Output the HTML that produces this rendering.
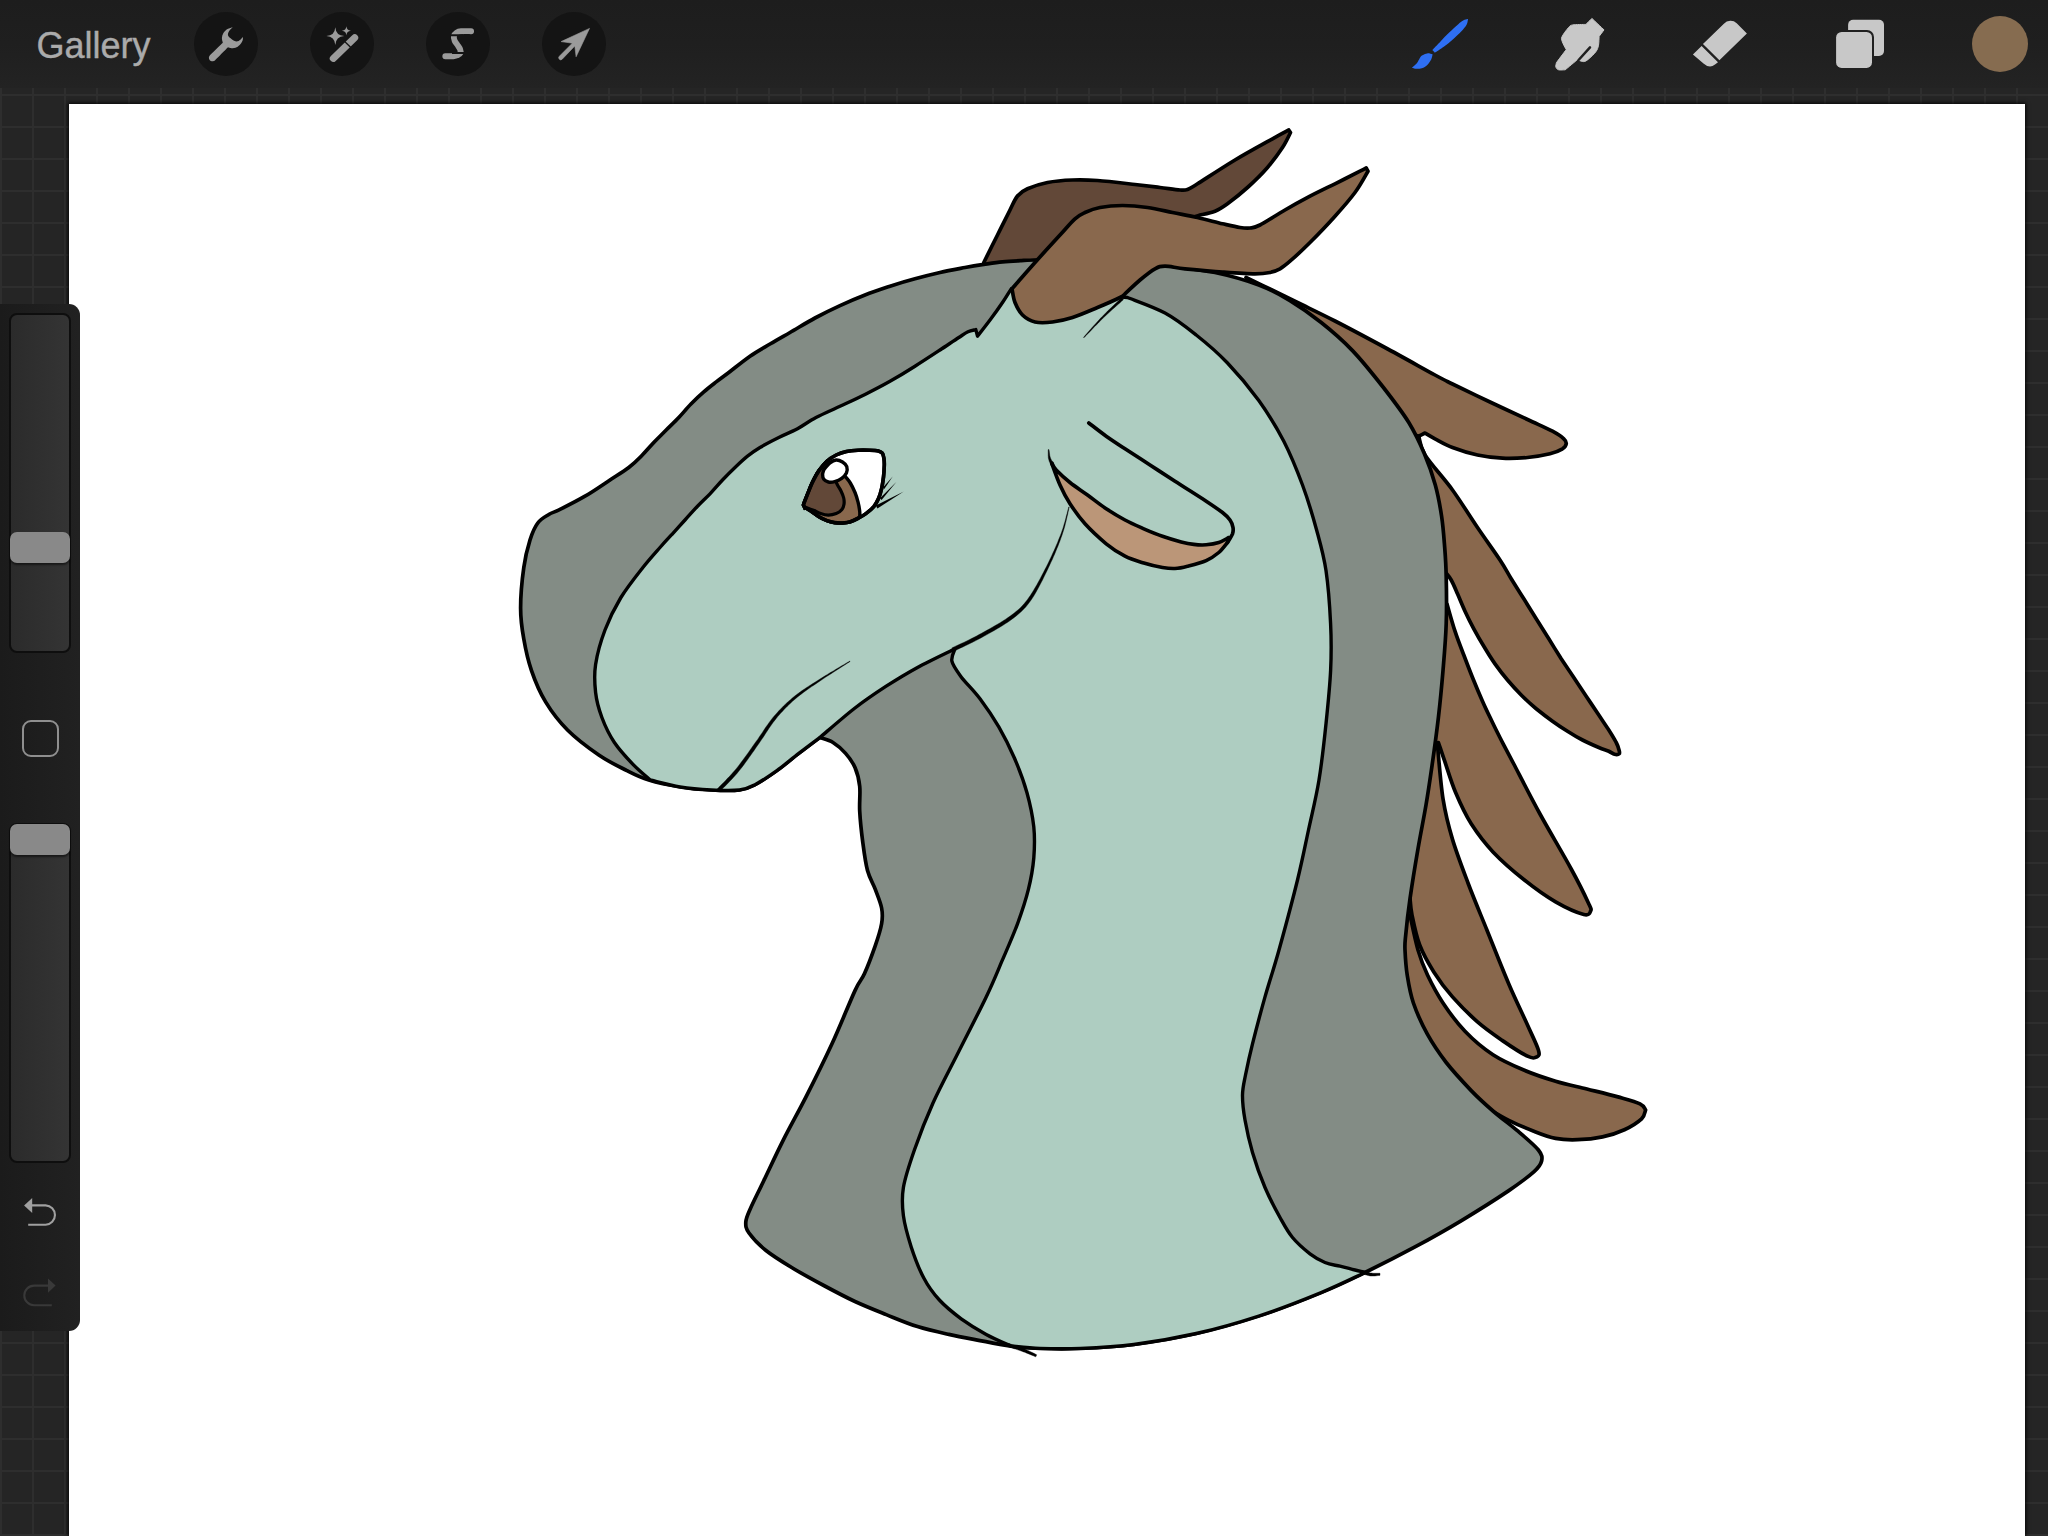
<!DOCTYPE html>
<html><head><meta charset="utf-8"><title>Procreate</title>
<style>
html,body{margin:0;padding:0;}
body{width:2048px;height:1536px;overflow:hidden;position:relative;font-family:"Liberation Sans",sans-serif;
 background-color:#252525;
 background-image:linear-gradient(to right,#2e2e2e 0,#2e2e2e 2px,transparent 2px),linear-gradient(to bottom,#2e2e2e 0,#2e2e2e 2px,transparent 2px);
 background-size:32px 32px;background-position:0px 94px;}
#top{position:absolute;left:0;top:0;width:2048px;height:88px;background:linear-gradient(to bottom,#1d1d1d 0%,#1f1f1f 50%,#232323 100%);}
#gallery{position:absolute;left:36.5px;top:23.5px;font-size:36px;line-height:44px;color:#ababab;letter-spacing:0;-webkit-text-stroke:0.4px #ababab;}
.circ{position:absolute;top:12px;width:64px;height:64px;border-radius:32px;background:#141414;}
#canvas{position:absolute;left:69.3px;top:103.9px;width:1955.7px;height:1432px;background:#fff;box-shadow:0 0 4px 1px rgba(0,0,0,0.9);}
#side{position:absolute;left:0;top:304px;width:80px;height:1027px;background:linear-gradient(to right,#1b1b1b,#212121);border-radius:0 11px 11px 0;}
.track{position:absolute;left:9px;width:58px;border-radius:8px;background:linear-gradient(to right,#2b2b2b,#343434);border:2px solid #0e0e0e;}
.thumb{position:absolute;left:10px;width:60px;height:31px;border-radius:7px;background:#898989;box-shadow:0 2px 2px rgba(0,0,0,.5);}
#sq{position:absolute;left:21.5px;top:416px;width:33.5px;height:32.5px;border:2px solid #8f8f8f;border-radius:9px;}
svg{position:absolute;left:0;top:0;}
</style></head><body>
<div id="canvas"></div>
<svg id="art" width="2048" height="1536" viewBox="0 0 2048 1536">
<path d="M1246.0 277.5 C1250.2 279.5 1262.4 285.3 1271.0 289.5 C1279.6 293.7 1286.8 297.2 1297.5 302.5 C1308.2 307.8 1320.4 313.5 1335.0 321.0 C1349.6 328.5 1368.3 338.5 1385.0 347.5 C1401.7 356.5 1423.8 368.9 1435.0 375.0 C1446.2 381.1 1443.3 379.5 1452.5 384.0 C1461.7 388.5 1477.5 396.1 1490.0 402.0 C1502.5 407.9 1517.1 414.6 1527.5 419.5 C1537.9 424.4 1546.5 428.0 1552.5 431.2 C1558.5 434.5 1561.5 436.7 1563.8 438.8 C1566.0 440.8 1566.5 442.1 1566.2 443.8 C1566.0 445.4 1565.2 447.1 1562.5 448.8 C1559.8 450.4 1555.8 452.3 1550.0 453.8 C1544.2 455.2 1535.4 456.8 1527.5 457.5 C1519.6 458.2 1510.8 458.7 1502.5 458.2 C1494.2 457.8 1485.8 456.8 1477.5 455.0 C1469.2 453.2 1459.6 450.2 1452.5 447.5 C1445.4 444.8 1439.6 441.2 1435.0 438.8 C1430.4 436.3 1426.7 434.0 1425.0 433.0 C1424.0 433.5 1419.8 435.7 1418.8 436.2 C1412.3 433.5 1399.8 437.7 1380.0 420.0 C1360.2 402.3 1313.3 345.0 1300.0 330.0 Z" fill="#89684d" stroke="#000" stroke-width="3.7" stroke-linejoin="round" stroke-linecap="round" />
<path d="M1418.8 436.2 C1419.8 439.4 1419.4 446.0 1425.0 455.0 C1430.6 464.0 1443.8 477.9 1452.5 490.0 C1461.2 502.1 1469.6 515.8 1477.5 527.5 C1485.4 539.2 1494.4 551.5 1500.0 560.0 C1505.6 568.5 1507.3 572.3 1511.2 578.8 C1515.2 585.2 1519.6 592.1 1523.8 598.8 C1527.9 605.4 1532.1 612.1 1536.2 618.8 C1540.4 625.4 1544.6 632.1 1548.8 638.8 C1552.9 645.4 1557.1 652.3 1561.2 658.8 C1565.4 665.2 1569.6 671.2 1573.8 677.5 C1577.9 683.8 1582.1 690.0 1586.2 696.2 C1590.4 702.5 1595.0 709.4 1598.8 715.0 C1602.5 720.6 1605.8 725.4 1608.8 730.0 C1611.7 734.6 1614.5 739.2 1616.2 742.5 C1618.0 745.8 1618.5 748.1 1619.0 750.0 C1619.5 751.9 1620.0 753.0 1619.2 753.8 C1618.5 754.5 1616.2 754.7 1614.5 754.3 C1612.8 753.9 1611.4 752.4 1608.8 751.2 C1606.1 750.1 1603.1 749.4 1598.8 747.5 C1594.4 745.6 1587.7 742.7 1582.5 740.0 C1577.3 737.3 1572.5 734.4 1567.5 731.2 C1562.5 728.1 1557.7 725.0 1552.5 721.2 C1547.3 717.5 1541.5 713.1 1536.2 708.8 C1531.0 704.4 1526.0 699.8 1521.2 695.0 C1516.5 690.2 1511.9 685.2 1507.5 680.0 C1503.1 674.8 1499.0 669.4 1495.0 663.8 C1491.0 658.1 1487.3 652.1 1483.8 646.2 C1480.2 640.4 1476.9 634.6 1473.8 628.8 C1470.6 622.9 1467.7 617.1 1465.0 611.2 C1462.3 605.4 1459.8 599.0 1457.5 593.8 C1455.2 588.5 1453.2 583.5 1451.2 580.0 C1449.3 576.5 1446.5 573.8 1445.6 572.5 C1438.0 570.4 1407.6 580.4 1400.0 560.0 C1392.4 539.6 1400.0 468.3 1400.0 450.0 Z" fill="#89684d" stroke="#000" stroke-width="3.7" stroke-linejoin="round" stroke-linecap="round" />
<path d="M1447.0 604.0 C1448.3 608.5 1452.2 622.8 1455.0 631.2 C1457.8 639.8 1460.8 647.3 1463.8 655.0 C1466.7 662.7 1469.4 669.8 1472.5 677.5 C1475.6 685.2 1479.2 693.8 1482.5 701.2 C1485.8 708.8 1489.4 716.0 1492.5 722.5 C1495.6 729.0 1497.7 733.1 1501.2 740.0 C1504.8 746.9 1507.3 751.7 1513.8 764.0 C1520.2 776.3 1530.4 796.5 1540.0 814.0 C1549.6 831.5 1563.2 854.2 1571.2 869.0 C1579.3 883.8 1585.2 896.0 1588.4 903.0 C1591.6 910.0 1591.4 909.1 1590.6 911.0 C1589.8 912.9 1589.6 916.0 1583.8 914.5 C1577.9 913.0 1565.5 907.6 1555.6 901.9 C1545.7 896.1 1534.8 888.3 1524.4 880.0 C1514.0 871.7 1501.9 861.3 1493.0 851.9 C1484.1 842.5 1477.5 833.6 1471.2 823.8 C1465.0 813.9 1460.0 802.9 1455.6 792.5 C1451.2 782.1 1447.6 769.6 1444.7 761.2 C1441.8 752.9 1439.5 745.6 1438.4 742.5 C1432.0 742.1 1406.4 763.8 1400.0 740.0 C1393.6 716.2 1400.0 623.3 1400.0 600.0 Z" fill="#89684d" stroke="#000" stroke-width="3.7" stroke-linejoin="round" stroke-linecap="round" />
<path d="M1437.5 745.0 C1438.4 754.0 1440.5 783.0 1443.0 798.8 C1445.5 814.5 1448.3 825.4 1452.5 839.4 C1456.7 853.4 1462.3 867.9 1468.0 883.0 C1473.7 898.1 1480.1 913.2 1486.9 930.0 C1493.7 946.8 1502.0 968.2 1508.8 984.0 C1515.5 999.8 1522.6 1014.0 1527.5 1025.0 C1532.4 1036.0 1536.8 1044.7 1538.4 1050.0 C1540.0 1055.3 1538.7 1055.9 1536.9 1056.9 C1535.1 1057.9 1533.2 1059.0 1527.5 1056.2 C1521.8 1053.5 1510.8 1046.3 1502.5 1040.6 C1494.2 1034.9 1485.8 1029.2 1477.5 1021.9 C1469.2 1014.6 1459.8 1005.2 1452.5 996.9 C1445.2 988.6 1439.2 980.5 1433.8 971.9 C1428.3 963.2 1423.3 954.5 1419.7 945.0 C1416.1 935.5 1413.6 922.8 1412.0 915.0 C1410.4 907.2 1410.3 900.8 1410.0 898.0 C1405.0 896.7 1383.3 913.0 1380.0 890.0 C1376.7 867.0 1388.3 781.7 1390.0 760.0 Z" fill="#89684d" stroke="#000" stroke-width="3.7" stroke-linejoin="round" stroke-linecap="round" />
<path d="M1410.0 915.0 C1411.3 920.8 1415.1 940.0 1418.0 950.0 C1420.9 960.0 1423.3 966.2 1427.5 975.0 C1431.7 983.8 1436.8 993.6 1443.0 1003.0 C1449.2 1012.4 1456.7 1022.6 1465.0 1031.2 C1473.3 1039.9 1483.1 1048.2 1493.0 1054.7 C1502.9 1061.2 1514.0 1065.9 1524.4 1070.3 C1534.8 1074.7 1545.2 1078.1 1555.6 1081.2 C1566.0 1084.4 1576.5 1086.4 1586.9 1089.0 C1597.3 1091.6 1609.2 1094.4 1618.0 1096.9 C1626.8 1099.4 1635.4 1101.6 1640.0 1103.8 C1644.6 1105.9 1644.7 1109.0 1645.6 1110.0 C1644.9 1111.5 1645.1 1115.5 1641.6 1118.8 C1638.1 1122.0 1630.9 1126.7 1624.4 1129.7 C1617.9 1132.7 1610.3 1135.2 1602.5 1136.9 C1594.7 1138.6 1585.3 1139.5 1577.5 1139.7 C1569.7 1140.0 1562.9 1139.8 1555.6 1138.4 C1548.3 1137.0 1541.6 1134.3 1533.8 1131.2 C1525.9 1128.2 1516.6 1124.2 1508.8 1120.3 C1500.9 1116.4 1490.5 1109.9 1486.9 1107.8 C1479.1 1104.8 1457.8 1108.0 1440.0 1090.0 C1422.2 1072.0 1390.0 1028.3 1380.0 1000.0 C1370.0 971.7 1380.0 933.3 1380.0 920.0 Z" fill="#89684d" stroke="#000" stroke-width="3.7" stroke-linejoin="round" stroke-linecap="round" />
<path d="M983.8 262.5 C986.0 257.9 993.1 243.8 997.5 235.0 C1001.9 226.2 1006.7 216.5 1010.0 210.0 C1013.3 203.5 1014.6 199.5 1017.5 196.0 C1020.4 192.5 1022.5 191.0 1027.5 188.8 C1032.5 186.5 1040.0 184.0 1047.5 182.5 C1055.0 181.0 1064.2 180.3 1072.5 180.0 C1080.8 179.7 1087.1 179.8 1097.5 180.5 C1107.9 181.2 1124.6 183.3 1135.0 184.5 C1145.4 185.7 1152.5 186.6 1160.0 187.5 C1167.5 188.4 1175.4 189.7 1180.0 190.0 C1184.6 190.3 1184.6 190.5 1187.5 189.5 C1190.4 188.5 1189.6 188.7 1197.5 183.8 C1205.4 178.8 1222.5 167.5 1235.0 160.0 C1247.5 152.5 1263.5 143.8 1272.5 138.8 C1281.5 133.8 1286.0 131.5 1288.8 130.0 C1289.0 130.4 1290.2 132.1 1290.5 132.5 C1289.2 135.0 1286.3 141.7 1282.5 147.5 C1278.7 153.3 1273.3 160.8 1267.5 167.5 C1261.7 174.2 1254.2 181.5 1247.5 187.5 C1240.8 193.5 1232.9 199.8 1227.5 203.8 C1222.1 207.7 1219.6 209.4 1215.0 211.2 C1210.4 213.1 1202.5 214.4 1200.0 215.0 C1183.3 220.8 1127.5 240.0 1100.0 250.0 C1072.5 260.0 1053.0 270.8 1034.7 275.0 C1016.4 279.2 997.5 275.0 990.0 275.0 Z" fill="#624838" stroke="#000" stroke-width="3.7" stroke-linejoin="round" stroke-linecap="round" />
<path d="M1165.0 265.3 C1154.2 264.1 1121.8 258.9 1100.0 258.0 C1078.2 257.1 1047.1 259.6 1034.0 260.0 C1020.9 260.4 1026.5 260.3 1021.2 260.6 C1016.0 260.9 1008.8 261.3 1002.5 261.9 C996.2 262.5 990.0 263.5 983.8 264.4 C977.5 265.3 972.3 266.1 965.0 267.5 C957.7 268.9 948.3 270.6 940.0 272.5 C931.7 274.4 923.3 276.5 915.0 278.8 C906.7 281.0 898.3 283.5 890.0 286.2 C881.7 289.0 873.3 291.8 865.0 295.0 C856.7 298.2 848.3 301.8 840.0 305.6 C831.7 309.4 823.3 313.5 815.0 318.0 C806.7 322.5 797.5 328.2 790.0 332.5 C782.5 336.8 776.7 340.0 770.0 344.0 C763.3 348.0 756.9 351.5 750.0 356.2 C743.1 361.0 734.4 368.2 728.8 372.5 C723.1 376.8 720.4 378.7 716.2 381.9 C712.1 385.1 707.9 388.3 703.8 391.9 C699.6 395.5 695.4 399.5 691.2 403.8 C687.1 408.0 682.9 413.1 678.8 417.5 C674.6 421.9 670.4 425.8 666.2 430.0 C662.1 434.2 657.9 438.1 653.8 442.5 C649.6 446.9 645.4 452.1 641.2 456.2 C637.1 460.4 634.0 463.5 628.8 467.5 C623.5 471.5 617.3 475.2 610.0 480.0 C602.7 484.8 593.3 491.4 585.0 496.2 C576.7 501.1 566.0 506.4 560.0 509.4 C554.0 512.4 552.5 512.2 548.8 514.5 C545.0 516.8 540.9 518.8 537.8 523.0 C534.7 527.2 532.3 532.6 530.0 540.0 C527.7 547.4 525.3 556.2 523.8 567.5 C522.2 578.8 520.6 596.1 520.6 608.0 C520.6 619.9 521.9 628.6 523.8 639.0 C525.6 649.4 527.9 660.1 531.5 670.6 C535.1 681.1 539.6 692.0 545.6 701.9 C551.6 711.8 558.6 721.1 567.5 730.0 C576.4 738.9 588.9 748.2 598.8 755.0 C608.6 761.8 618.6 766.4 626.9 770.6 C635.2 774.8 639.9 777.3 648.8 780.0 C657.6 782.7 669.6 785.2 680.0 786.9 C690.4 788.6 701.4 789.5 711.2 790.0 C721.1 790.5 732.1 790.9 739.4 790.0 C746.7 789.1 748.8 787.9 755.0 784.7 C761.2 781.5 769.6 775.8 776.9 770.6 C784.2 765.4 791.5 759.0 798.8 753.4 C806.0 747.8 817.0 739.6 820.6 736.9 L820.6 737.8 C822.7 738.6 828.8 739.9 833.0 742.5 C837.2 745.1 841.9 749.2 845.6 753.4 C849.3 757.6 852.6 762.0 855.0 767.5 C857.4 773.0 858.9 779.0 859.7 786.2 C860.5 793.5 859.2 801.9 859.7 811.2 C860.2 820.6 861.5 832.6 862.8 842.5 C864.1 852.4 865.4 862.8 867.5 870.6 C869.6 878.4 872.9 883.2 875.3 889.4 C877.6 895.6 880.5 902.3 881.6 908.0 C882.7 913.7 882.7 917.5 881.6 923.8 C880.5 930.0 878.2 937.3 875.3 945.6 C872.4 953.9 867.8 966.2 864.4 973.8 C861.0 981.2 860.4 978.9 855.0 990.6 C849.6 1002.3 840.2 1026.0 832.0 1043.8 C823.8 1061.5 814.2 1080.8 806.0 1096.9 C797.8 1113.0 790.1 1126.5 783.0 1140.6 C775.9 1154.7 769.0 1169.8 763.5 1181.2 C758.0 1192.7 753.0 1202.6 750.0 1209.4 C747.0 1216.2 746.0 1218.1 745.8 1222.0 C745.6 1225.9 745.6 1228.2 749.0 1233.0 C752.4 1237.8 758.8 1244.7 766.0 1250.5 C773.2 1256.3 782.9 1262.2 792.5 1268.0 C802.1 1273.8 813.3 1279.9 823.8 1285.5 C834.2 1291.1 844.6 1296.7 855.0 1301.5 C865.4 1306.3 875.8 1310.4 886.2 1314.6 C896.7 1318.8 907.1 1323.3 917.5 1326.6 C927.9 1329.9 938.3 1332.1 948.8 1334.4 C959.2 1336.7 969.6 1338.6 980.0 1340.6 C990.4 1342.6 1006.0 1345.3 1011.2 1346.2 C1016.0 1346.6 1028.4 1348.0 1040.0 1348.4 C1051.6 1348.8 1065.0 1349.1 1080.6 1348.4 C1096.2 1347.8 1114.5 1347.0 1133.8 1344.5 C1153.0 1342.0 1175.4 1338.2 1196.2 1333.5 C1217.1 1328.8 1237.9 1322.8 1258.8 1316.0 C1279.6 1309.2 1303.5 1299.8 1321.2 1292.5 C1339.0 1285.2 1349.4 1280.1 1365.0 1272.5 C1380.6 1264.9 1398.8 1255.6 1415.0 1246.9 C1431.2 1238.2 1446.3 1229.7 1461.9 1220.3 C1477.5 1210.9 1496.8 1198.7 1508.8 1190.6 C1520.7 1182.5 1528.3 1176.8 1533.8 1171.9 C1539.2 1167.0 1540.8 1164.7 1541.6 1161.0 C1542.4 1157.3 1542.3 1155.0 1538.4 1150.0 C1534.5 1145.0 1525.6 1137.8 1518.0 1131.2 C1510.4 1124.8 1500.8 1117.8 1493.0 1111.0 C1485.2 1104.2 1479.0 1098.7 1471.2 1090.6 C1463.5 1082.5 1453.5 1071.9 1446.2 1062.5 C1439.0 1053.1 1433.0 1044.3 1427.5 1034.4 C1422.0 1024.5 1416.8 1012.9 1413.4 1003.0 C1410.0 993.1 1408.6 983.8 1407.2 975.0 C1405.8 966.2 1405.3 956.5 1405.0 950.0 C1404.7 943.5 1404.8 944.8 1405.6 936.2 C1406.4 927.7 1407.9 913.3 1410.0 898.8 C1412.1 884.2 1415.3 864.4 1418.0 848.8 C1420.7 833.1 1423.6 819.1 1426.0 805.0 C1428.4 790.9 1430.1 779.0 1432.2 764.4 C1434.3 749.8 1436.6 733.1 1438.4 717.5 C1440.2 701.9 1441.7 686.2 1443.0 670.6 C1444.3 655.0 1445.7 639.4 1446.2 623.8 C1446.8 608.1 1446.5 589.6 1446.2 576.9 C1446.0 564.2 1445.5 557.6 1444.7 547.5 C1443.9 537.4 1443.2 526.7 1441.6 516.2 C1440.0 505.8 1438.2 495.4 1435.3 485.0 C1432.4 474.6 1428.8 464.2 1424.4 453.8 C1420.0 443.3 1415.5 433.5 1408.8 422.5 C1402.0 411.5 1393.1 400.0 1383.8 388.0 C1374.4 376.0 1362.9 361.5 1352.5 350.6 C1342.1 339.7 1331.7 330.8 1321.2 322.5 C1310.8 314.2 1300.4 306.9 1290.0 300.6 C1279.6 294.4 1271.2 289.7 1258.8 285.0 C1246.2 280.3 1230.6 275.8 1215.0 272.5 C1199.4 269.2 1173.3 266.5 1165.0 265.3 Z" fill="#838c85" stroke="#000" stroke-width="3.7" stroke-linejoin="round" stroke-linecap="round" />
<path d="M1011.2 288.8 C1009.8 291.0 1006.0 297.3 1002.5 302.5 C999.0 307.7 994.2 314.4 990.0 320.0 C985.8 325.6 979.6 333.5 977.5 336.2 C977.2 335.1 976.1 330.7 975.8 329.6 C974.5 330.0 970.8 330.5 968.0 331.8 C965.2 333.1 963.4 334.5 958.8 337.5 C954.1 340.5 947.3 345.2 940.0 350.0 C932.7 354.8 923.3 361.0 915.0 366.2 C906.7 371.5 898.3 376.6 890.0 381.2 C881.7 385.9 873.3 390.2 865.0 394.4 C856.7 398.6 848.2 402.4 840.0 406.2 C831.8 410.1 823.1 413.8 816.0 417.5 C808.9 421.2 803.7 425.4 797.5 428.8 C791.3 432.1 785.0 434.4 778.8 437.5 C772.5 440.6 765.2 444.4 760.0 447.5 C754.8 450.6 751.7 452.9 747.5 456.2 C743.3 459.6 739.2 463.5 735.0 467.5 C730.8 471.5 726.7 475.6 722.5 480.0 C718.3 484.4 714.2 489.4 710.0 493.8 C705.8 498.1 701.7 501.9 697.5 506.2 C693.3 510.6 689.2 515.4 685.0 520.0 C680.8 524.6 676.7 529.2 672.5 533.8 C668.3 538.3 665.0 541.8 660.0 547.5 C655.0 553.2 649.1 559.6 642.5 568.0 C635.9 576.4 626.9 587.7 620.6 598.0 C614.4 608.3 609.2 618.9 605.0 630.0 C600.8 641.1 597.2 654.0 595.6 664.4 C594.0 674.8 594.6 683.6 595.6 692.5 C596.6 701.4 598.8 709.2 601.9 717.5 C605.0 725.8 609.2 734.7 614.4 742.5 C619.6 750.3 627.0 758.1 633.0 764.4 C639.0 770.6 647.4 777.4 650.3 780.0 C655.2 781.1 669.8 785.2 680.0 786.9 C690.2 788.6 701.4 789.5 711.2 790.0 C721.1 790.5 732.1 790.9 739.4 790.0 C746.7 789.1 748.8 787.9 755.0 784.7 C761.2 781.5 769.6 775.8 776.9 770.6 C784.2 765.4 791.5 759.0 798.8 753.4 C806.0 747.8 817.0 739.6 820.6 736.9 C826.3 732.1 844.1 716.4 855.0 708.0 C865.9 699.6 875.8 693.0 886.2 686.2 C896.7 679.5 906.0 673.8 917.5 667.5 C929.0 661.2 948.8 651.9 955.0 648.8 C954.5 650.8 950.9 656.6 951.9 661.2 C952.9 665.9 956.6 670.6 961.2 676.9 C965.9 683.1 973.8 690.4 980.0 698.8 C986.2 707.1 993.0 717.0 998.8 726.9 C1004.5 736.8 1009.7 747.1 1014.4 758.0 C1019.1 768.9 1023.7 781.0 1026.9 792.5 C1030.1 804.0 1032.6 816.0 1033.8 826.9 C1034.9 837.8 1034.6 847.6 1033.8 858.0 C1032.9 868.4 1031.1 878.4 1028.4 889.4 C1025.7 900.4 1021.9 911.8 1017.5 923.8 C1013.1 935.7 1007.1 949.1 1001.9 961.2 C996.7 973.4 993.6 981.6 986.2 996.9 C978.9 1012.2 966.9 1035.3 958.0 1053.0 C949.1 1070.7 940.3 1086.8 933.0 1103.0 C925.7 1119.2 919.3 1135.9 914.4 1150.0 C909.5 1164.1 905.2 1176.6 903.4 1187.5 C901.6 1198.4 902.1 1205.7 903.4 1215.6 C904.7 1225.5 907.9 1236.5 911.2 1246.9 C914.6 1257.3 919.1 1269.2 923.8 1278.0 C928.4 1286.8 933.1 1293.2 939.4 1300.0 C945.6 1306.8 953.4 1313.0 961.2 1318.8 C969.1 1324.5 978.0 1329.9 986.2 1334.4 C994.5 1338.9 1006.9 1344.1 1011.0 1346.0 C1015.8 1346.4 1028.4 1348.0 1040.0 1348.4 C1051.6 1348.8 1065.0 1349.1 1080.6 1348.4 C1096.2 1347.8 1114.5 1347.0 1133.8 1344.5 C1153.0 1342.0 1175.4 1338.2 1196.2 1333.5 C1217.1 1328.8 1237.9 1322.8 1258.8 1316.0 C1279.6 1309.2 1303.5 1299.8 1321.2 1292.5 C1339.0 1285.2 1357.7 1275.8 1365.0 1272.5 C1363.3 1272.1 1359.2 1271.0 1355.0 1270.0 C1350.8 1269.0 1345.0 1267.5 1340.0 1266.2 C1335.0 1265.0 1330.0 1264.6 1325.0 1262.5 C1320.0 1260.4 1315.4 1257.9 1310.0 1253.8 C1304.6 1249.6 1297.5 1243.5 1292.5 1237.5 C1287.5 1231.5 1284.6 1225.8 1280.0 1217.5 C1275.4 1209.2 1269.6 1198.3 1265.0 1187.5 C1260.4 1176.7 1255.8 1163.8 1252.5 1152.5 C1249.2 1141.2 1246.7 1129.6 1245.0 1120.0 C1243.3 1110.4 1242.4 1102.5 1242.5 1095.0 C1242.6 1087.5 1243.8 1083.5 1245.5 1075.0 C1247.2 1066.5 1249.2 1056.8 1252.5 1043.8 C1255.8 1030.7 1260.6 1012.5 1265.0 996.9 C1269.4 981.3 1273.6 969.5 1279.0 950.0 C1284.4 930.5 1292.6 900.0 1297.5 880.0 C1302.4 860.0 1304.9 846.7 1308.5 830.0 C1312.1 813.3 1316.1 797.7 1319.0 780.0 C1321.9 762.3 1324.1 742.0 1326.0 723.8 C1327.9 705.5 1329.8 687.3 1330.6 670.6 C1331.4 653.9 1331.4 640.4 1330.6 623.8 C1329.8 607.1 1328.3 586.2 1326.0 570.6 C1323.7 555.0 1320.5 544.3 1316.6 530.0 C1312.7 515.7 1308.0 499.8 1302.5 485.0 C1297.0 470.2 1291.0 455.3 1283.8 441.2 C1276.5 427.2 1268.1 413.6 1258.8 400.6 C1249.4 387.6 1237.9 373.9 1227.5 363.0 C1217.1 352.1 1206.7 343.3 1196.2 335.0 C1185.8 326.7 1176.5 319.2 1165.0 313.0 C1153.5 306.8 1133.8 300.1 1127.5 297.5 Z" fill="#aecdc1" stroke="#000" stroke-width="3.4" stroke-linejoin="round" stroke-linecap="round" />
<path d="M1007.5 1346.6 L1008.2 1346.8 L1009.1 1347.1 L1010.2 1347.5 L1011.5 1347.8 L1012.8 1348.2 L1014.2 1348.7 L1015.6 1349.1 L1017.1 1349.6 L1018.5 1350.1 L1019.9 1350.5 L1021.2 1351.0 L1022.4 1351.4 L1023.6 1351.9 L1024.9 1352.3 L1026.2 1352.9 L1027.5 1353.4 L1028.8 1353.9 L1030.0 1354.4 L1031.2 1354.9 L1032.4 1355.4 L1033.4 1355.8 L1034.3 1356.2 L1035.1 1356.6 L1035.8 1356.8 L1036.7 1354.8 L1036.1 1354.5 L1035.3 1354.1 L1034.4 1353.6 L1033.4 1353.1 L1032.3 1352.6 L1031.1 1352.0 L1029.9 1351.4 L1028.6 1350.8 L1027.3 1350.2 L1026.0 1349.6 L1024.8 1349.1 L1023.6 1348.6 L1022.3 1348.1 L1020.9 1347.6 L1019.5 1347.1 L1018.1 1346.6 L1016.6 1346.1 L1015.2 1345.6 L1013.8 1345.1 L1012.5 1344.7 L1011.2 1344.3 L1010.2 1343.9 L1009.3 1343.6 L1008.5 1343.4Z" fill="#000" stroke="#000" stroke-width="0.4" stroke-linejoin="round"/>
<path d="M1361.5 1273.6 L1361.9 1273.7 L1362.5 1273.9 L1363.1 1274.1 L1363.8 1274.3 L1364.6 1274.5 L1365.5 1274.8 L1366.3 1275.0 L1367.2 1275.3 L1368.2 1275.5 L1369.1 1275.7 L1370.0 1275.9 L1370.8 1276.0 L1371.7 1276.0 L1372.6 1276.0 L1373.5 1276.0 L1374.4 1276.0 L1375.3 1275.9 L1376.1 1275.8 L1377.0 1275.7 L1377.7 1275.6 L1378.5 1275.5 L1379.1 1275.4 L1379.6 1275.4 L1380.0 1275.3 L1380.0 1273.3 L1379.5 1273.3 L1378.9 1273.3 L1378.3 1273.3 L1377.6 1273.3 L1376.8 1273.3 L1376.0 1273.3 L1375.2 1273.3 L1374.3 1273.3 L1373.5 1273.3 L1372.7 1273.2 L1371.9 1273.1 L1371.2 1273.0 L1370.5 1272.9 L1369.7 1272.7 L1368.9 1272.5 L1368.1 1272.3 L1367.2 1272.0 L1366.4 1271.7 L1365.6 1271.5 L1364.8 1271.2 L1364.1 1270.9 L1363.5 1270.7 L1362.9 1270.5 L1362.5 1270.4Z" fill="#000" stroke="#000" stroke-width="0.4" stroke-linejoin="round"/>
<path d="M953.8 651.2 L955.1 650.5 L956.7 649.8 L958.5 648.9 L960.6 647.9 L962.9 646.9 L965.3 645.7 L967.9 644.5 L970.5 643.2 L973.1 641.9 L975.8 640.6 L978.4 639.2 L980.9 637.9 L983.4 636.5 L986.0 635.1 L988.7 633.6 L991.5 632.0 L994.3 630.4 L997.1 628.8 L999.8 627.2 L1002.6 625.5 L1005.2 623.8 L1007.7 622.2 L1010.1 620.6 L1012.3 618.9 L1014.3 617.4 L1016.2 615.9 L1017.9 614.5 L1019.6 613.1 L1021.1 611.7 L1022.6 610.3 L1024.0 608.8 L1025.5 607.3 L1026.9 605.6 L1028.3 603.8 L1029.8 601.8 L1031.3 599.7 L1032.9 597.3 L1034.5 594.7 L1036.1 591.9 L1037.7 589.1 L1039.3 586.1 L1040.9 583.0 L1042.5 579.9 L1044.0 576.8 L1045.5 573.7 L1047.0 570.7 L1048.4 567.7 L1049.7 564.9 L1051.0 562.1 L1052.3 559.4 L1053.5 556.6 L1054.7 553.9 L1055.8 551.2 L1056.9 548.5 L1058.0 545.9 L1059.0 543.3 L1060.0 540.7 L1060.9 538.1 L1061.8 535.7 L1062.6 533.2 L1063.4 530.8 L1064.2 528.2 L1064.9 525.7 L1065.5 523.1 L1066.2 520.6 L1066.7 518.1 L1067.3 515.8 L1067.8 513.6 L1068.2 511.6 L1068.6 509.8 L1068.9 508.3 L1069.2 507.0 L1068.8 507.0 L1068.5 508.2 L1068.0 509.7 L1067.6 511.5 L1067.1 513.5 L1066.5 515.6 L1065.9 517.9 L1065.3 520.4 L1064.6 522.8 L1063.8 525.4 L1063.1 527.9 L1062.2 530.4 L1061.4 532.8 L1060.5 535.2 L1059.5 537.6 L1058.5 540.1 L1057.5 542.7 L1056.4 545.2 L1055.3 547.8 L1054.1 550.5 L1052.9 553.1 L1051.7 555.8 L1050.4 558.5 L1049.1 561.2 L1047.8 563.9 L1046.4 566.7 L1044.9 569.6 L1043.4 572.6 L1041.8 575.6 L1040.2 578.7 L1038.5 581.7 L1036.9 584.7 L1035.2 587.6 L1033.5 590.4 L1031.9 593.1 L1030.3 595.6 L1028.7 597.8 L1027.2 599.9 L1025.7 601.8 L1024.3 603.5 L1023.0 605.0 L1021.6 606.5 L1020.2 607.9 L1018.8 609.2 L1017.3 610.5 L1015.7 611.8 L1014.0 613.2 L1012.2 614.6 L1010.2 616.1 L1008.0 617.6 L1005.7 619.2 L1003.2 620.8 L1000.6 622.4 L998.0 624.0 L995.2 625.6 L992.4 627.2 L989.7 628.8 L986.9 630.3 L984.2 631.8 L981.6 633.3 L979.1 634.6 L976.6 636.0 L974.1 637.3 L971.5 638.6 L968.9 639.9 L966.3 641.2 L963.8 642.4 L961.3 643.5 L959.1 644.6 L957.0 645.6 L955.1 646.4 L953.5 647.2 L952.2 647.8Z" fill="#000" stroke="#000" stroke-width="0.4" stroke-linejoin="round"/>
<path d="M720.1 791.2 L720.9 790.3 L722.1 789.2 L723.4 787.8 L724.8 786.4 L726.5 784.7 L728.2 783.0 L730.0 781.1 L731.8 779.2 L733.6 777.2 L735.4 775.2 L737.2 773.2 L738.9 771.1 L740.5 769.1 L742.2 766.9 L743.9 764.7 L745.6 762.3 L747.3 760.0 L749.0 757.6 L750.7 755.2 L752.4 752.8 L754.1 750.4 L755.7 748.0 L757.3 745.7 L758.9 743.5 L760.4 741.3 L761.9 739.1 L763.4 736.9 L764.8 734.7 L766.2 732.6 L767.6 730.4 L769.0 728.3 L770.4 726.3 L771.8 724.3 L773.2 722.3 L774.7 720.4 L776.2 718.5 L777.7 716.6 L779.3 714.8 L780.8 713.1 L782.4 711.4 L783.9 709.7 L785.5 708.0 L787.1 706.4 L788.8 704.8 L790.5 703.2 L792.2 701.6 L794.0 700.0 L795.8 698.5 L797.6 696.9 L799.5 695.4 L801.5 693.9 L803.4 692.4 L805.4 691.0 L807.5 689.5 L809.5 688.1 L811.6 686.6 L813.8 685.2 L816.0 683.7 L818.2 682.2 L820.4 680.7 L822.8 679.1 L825.4 677.3 L828.2 675.5 L831.1 673.7 L834.0 671.8 L836.8 670.0 L839.6 668.2 L842.2 666.5 L844.7 664.9 L846.8 663.6 L848.7 662.4 L850.1 661.4 L849.9 661.1 L848.4 661.9 L846.5 663.0 L844.3 664.4 L841.8 665.8 L839.1 667.4 L836.3 669.1 L833.4 670.9 L830.4 672.6 L827.5 674.4 L824.7 676.1 L822.0 677.8 L819.6 679.3 L817.3 680.8 L815.0 682.2 L812.8 683.6 L810.6 685.0 L808.4 686.4 L806.3 687.8 L804.2 689.2 L802.1 690.6 L800.1 692.1 L798.1 693.5 L796.1 695.0 L794.2 696.5 L792.3 698.1 L790.5 699.7 L788.7 701.2 L786.9 702.8 L785.2 704.4 L783.5 706.0 L781.9 707.7 L780.2 709.4 L778.6 711.1 L777.0 712.9 L775.4 714.7 L773.8 716.5 L772.2 718.4 L770.7 720.4 L769.2 722.4 L767.8 724.5 L766.3 726.5 L764.9 728.6 L763.5 730.7 L762.1 732.9 L760.6 735.0 L759.1 737.2 L757.7 739.4 L756.1 741.5 L754.5 743.7 L752.9 746.0 L751.2 748.4 L749.6 750.8 L747.9 753.2 L746.2 755.5 L744.4 757.9 L742.7 760.3 L741.0 762.5 L739.4 764.7 L737.7 766.9 L736.1 768.9 L734.5 770.8 L732.7 772.8 L731.0 774.8 L729.1 776.7 L727.3 778.6 L725.6 780.5 L723.9 782.2 L722.3 783.8 L720.8 785.3 L719.5 786.6 L718.4 787.8 L717.4 788.8Z" fill="#000" stroke="#000" stroke-width="0.4" stroke-linejoin="round"/>
<path d="M1121.6 297.8 L1120.7 298.7 L1119.5 299.8 L1118.2 301.1 L1116.6 302.5 L1115.0 304.1 L1113.2 305.8 L1111.4 307.5 L1109.5 309.3 L1107.6 311.1 L1105.8 312.9 L1104.0 314.7 L1102.4 316.4 L1100.7 318.1 L1099.0 320.0 L1097.2 321.9 L1095.4 324.0 L1093.5 326.0 L1091.7 328.0 L1090.0 329.9 L1088.4 331.8 L1086.9 333.5 L1085.6 335.0 L1084.5 336.3 L1083.6 337.3 L1083.9 337.7 L1084.9 336.7 L1086.1 335.5 L1087.5 334.0 L1089.1 332.4 L1090.8 330.7 L1092.6 328.8 L1094.4 326.8 L1096.3 324.9 L1098.3 323.0 L1100.1 321.1 L1101.9 319.3 L1103.6 317.6 L1105.3 316.0 L1107.1 314.3 L1109.0 312.6 L1110.9 310.8 L1112.8 309.1 L1114.7 307.4 L1116.5 305.8 L1118.2 304.3 L1119.8 302.9 L1121.2 301.6 L1122.4 300.6 L1123.4 299.7Z" fill="#000" stroke="#000" stroke-width="0.4" stroke-linejoin="round"/>
<path d="M1012.0 288.8 C1015.8 284.4 1027.0 271.5 1035.0 262.5 C1043.0 253.5 1053.3 242.3 1060.0 235.0 C1066.7 227.7 1070.8 222.5 1075.0 218.8 C1079.2 215.0 1080.8 214.4 1085.0 212.5 C1089.2 210.6 1093.8 208.7 1100.0 207.5 C1106.2 206.3 1114.6 205.5 1122.5 205.5 C1130.4 205.5 1139.2 206.3 1147.5 207.5 C1155.8 208.7 1164.2 210.8 1172.5 212.5 C1180.8 214.2 1189.2 215.6 1197.5 217.5 C1205.8 219.4 1215.4 222.1 1222.5 223.8 C1229.6 225.4 1235.4 226.8 1240.0 227.5 C1244.6 228.2 1246.7 228.4 1250.0 228.0 C1253.3 227.6 1254.2 228.0 1260.0 225.0 C1265.8 222.0 1276.7 214.8 1285.0 210.0 C1293.3 205.2 1301.7 200.6 1310.0 196.2 C1318.3 191.9 1326.7 187.9 1335.0 183.8 C1343.3 179.6 1354.8 173.9 1360.0 171.2 C1365.2 168.6 1365.2 168.5 1366.2 168.0 C1366.5 168.5 1367.7 170.7 1368.0 171.2 C1365.8 174.8 1360.5 185.0 1355.0 192.5 C1349.5 200.0 1342.5 207.9 1335.0 216.2 C1327.5 224.6 1317.5 235.0 1310.0 242.5 C1302.5 250.0 1295.0 256.9 1290.0 261.2 C1285.0 265.6 1283.3 266.9 1280.0 268.8 C1276.7 270.6 1274.2 271.7 1270.0 272.5 C1265.8 273.3 1262.9 273.8 1255.0 273.8 C1247.1 273.7 1234.2 272.8 1222.5 272.0 C1210.8 271.2 1194.6 269.7 1185.0 268.8 C1175.4 267.8 1170.0 266.2 1165.0 266.2 C1160.0 266.2 1159.2 266.5 1155.0 268.8 C1150.8 271.0 1145.0 275.8 1140.0 280.0 C1135.0 284.2 1128.3 290.8 1125.0 293.8 C1121.7 296.7 1124.6 295.2 1120.0 297.5 C1115.4 299.8 1105.4 304.2 1097.5 307.5 C1089.6 310.8 1080.0 315.1 1072.5 317.5 C1065.0 319.9 1058.8 321.2 1052.5 322.0 C1046.2 322.8 1040.0 323.2 1035.0 322.0 C1030.0 320.8 1025.8 318.2 1022.5 315.0 C1019.2 311.8 1016.8 306.9 1015.0 302.5 C1013.2 298.1 1012.5 291.0 1012.0 288.8 Z" fill="#89684d" stroke="#000" stroke-width="3.7" stroke-linejoin="round" stroke-linecap="round" />
<path d="M1051.9 463.0 C1052.6 464.2 1053.2 466.8 1056.2 470.0 C1059.3 473.2 1064.8 478.3 1070.0 482.5 C1075.2 486.7 1081.5 490.6 1087.5 495.0 C1093.5 499.4 1100.0 504.6 1106.2 508.8 C1112.5 512.9 1118.8 516.7 1125.0 520.0 C1131.2 523.3 1137.5 526.0 1143.8 528.8 C1150.0 531.5 1156.2 534.1 1162.5 536.2 C1168.8 538.4 1176.0 540.5 1181.2 541.9 C1186.5 543.3 1189.6 543.9 1193.8 544.4 C1197.9 544.9 1202.1 545.1 1206.2 544.8 C1210.4 544.4 1215.0 543.7 1218.8 542.5 C1222.5 541.3 1227.1 538.3 1228.8 537.5 C1228.5 538.3 1227.7 541.7 1227.5 542.5 C1226.0 544.2 1222.3 549.5 1218.8 552.5 C1215.2 555.5 1211.5 558.3 1206.2 560.6 C1201.0 562.9 1192.7 564.9 1187.5 566.2 C1182.3 567.6 1179.2 568.3 1175.0 568.5 C1170.8 568.7 1167.7 568.4 1162.5 567.5 C1157.3 566.6 1150.0 564.9 1143.8 563.0 C1137.5 561.1 1131.2 559.5 1125.0 556.2 C1118.8 553.0 1112.9 549.2 1106.2 543.8 C1099.6 538.3 1091.0 530.4 1085.0 523.8 C1079.0 517.1 1074.2 510.2 1070.0 503.8 C1065.8 497.3 1063.0 491.7 1060.0 485.0 C1057.0 478.3 1053.2 467.3 1051.9 463.8 Z" fill="#bb9678" stroke="#000" stroke-width="3.6" stroke-linejoin="round" stroke-linecap="round" />
<path d="M1088.8 423.0 C1091.7 425.2 1100.2 432.0 1106.2 436.2 C1112.3 440.5 1117.7 444.0 1125.0 448.8 C1132.3 453.5 1141.7 459.6 1150.0 465.0 C1158.3 470.4 1165.6 475.2 1175.0 481.2 C1184.4 487.3 1198.3 496.0 1206.2 501.2 C1214.2 506.5 1218.5 509.4 1222.5 512.5 C1226.5 515.6 1228.2 517.5 1230.0 520.0 C1231.8 522.5 1232.6 525.2 1233.0 527.5 C1233.4 529.8 1233.4 531.2 1232.5 533.8 C1231.6 536.2 1228.3 541.0 1227.5 542.5" fill="none" stroke="#000" stroke-width="3.7" stroke-linejoin="round" stroke-linecap="round" />
<path d="M1048.3 449.5 L1048.3 449.9 L1048.2 450.5 L1048.2 451.1 L1048.2 451.8 L1048.2 452.5 L1048.2 453.4 L1048.2 454.2 L1048.2 455.0 L1048.2 455.9 L1048.3 456.7 L1048.3 457.5 L1048.4 458.2 L1048.6 459.0 L1048.8 459.7 L1049.0 460.5 L1049.2 461.2 L1049.5 461.9 L1049.8 462.6 L1050.1 463.3 L1050.3 463.9 L1050.5 464.5 L1050.7 465.0 L1050.9 465.4 L1051.0 465.7 L1054.0 464.3 L1053.8 463.9 L1053.5 463.5 L1053.2 463.1 L1052.9 462.6 L1052.6 462.0 L1052.2 461.4 L1051.9 460.8 L1051.5 460.2 L1051.2 459.6 L1050.9 459.0 L1050.6 458.3 L1050.4 457.8 L1050.2 457.1 L1050.0 456.4 L1049.8 455.7 L1049.7 454.9 L1049.6 454.1 L1049.5 453.3 L1049.4 452.5 L1049.3 451.7 L1049.2 451.0 L1049.1 450.4 L1049.0 449.9 L1048.9 449.5Z" fill="#000" stroke="#000" stroke-width="0.4" stroke-linejoin="round"/>
<path d="M803.4 505.0 C804.0 503.3 805.7 498.7 807.3 494.8 C808.9 490.9 810.8 485.6 812.8 481.6 C814.8 477.6 816.6 474.0 819.0 470.6 C821.4 467.2 824.0 463.9 826.9 461.2 C829.8 458.6 833.0 456.6 836.2 455.0 C839.5 453.4 842.8 452.3 846.4 451.5 C850.0 450.7 854.1 450.4 858.0 450.2 C861.9 450.0 866.4 450.1 869.8 450.2 C873.2 450.3 876.3 450.4 878.4 450.9 C880.5 451.4 881.4 452.0 882.3 453.2 C883.2 454.4 883.6 456.3 883.9 458.3 C884.2 460.3 884.4 462.1 884.3 465.2 C884.2 468.3 884.0 473.0 883.5 476.9 C883.0 480.8 882.5 485.0 881.6 488.6 C880.8 492.2 879.7 495.8 878.4 498.8 C877.1 501.8 875.8 504.1 873.8 506.6 C871.7 509.1 868.5 511.7 865.9 513.6 C863.3 515.5 860.6 516.9 858.0 518.3 C855.4 519.7 852.9 521.0 850.3 521.8 C847.7 522.6 845.1 522.9 842.5 523.0 C839.9 523.1 837.3 523.0 834.7 522.6 C832.1 522.2 829.5 521.6 826.9 520.6 C824.3 519.6 821.6 518.3 819.0 516.7 C816.4 515.1 813.6 512.8 811.2 511.2 C808.9 509.7 806.3 508.3 805.0 507.3 C803.7 506.3 803.7 505.4 803.4 505.0 Z" fill="#fff" stroke="#000" stroke-width="3.6" stroke-linejoin="round" stroke-linecap="round" />
<path d="M826.9 461.2 C828.4 462.0 832.9 463.4 836.0 466.0 C839.1 468.6 843.2 474.1 845.6 476.9 C848.0 479.7 848.7 480.4 850.3 483.0 C851.9 485.6 853.7 489.4 855.0 492.5 C856.3 495.6 857.2 498.8 858.0 501.9 C858.8 505.0 859.4 508.7 859.7 511.2 C860.0 513.8 859.7 516.2 859.7 517.2 C858.1 518.0 853.2 520.8 850.3 521.8 C847.4 522.8 845.1 522.9 842.5 523.0 C839.9 523.1 837.3 523.0 834.7 522.6 C832.1 522.2 829.5 521.6 826.9 520.6 C824.3 519.6 821.6 518.3 819.0 516.7 C816.4 515.1 813.6 512.8 811.2 511.2 C808.9 509.7 806.3 508.3 805.0 507.3 C803.7 506.3 803.7 505.4 803.4 505.0 C804.0 503.3 805.7 498.7 807.3 494.8 C808.9 490.9 810.8 485.6 812.8 481.6 C814.8 477.6 816.6 474.0 819.0 470.6 C821.4 467.2 825.6 462.8 826.9 461.2 Z" fill="#89684d" stroke="#000" stroke-width="3.4" stroke-linejoin="round" stroke-linecap="round" />
<path d="M826.9 461.2 C827.9 463.4 831.3 470.2 833.0 474.0 C834.7 477.8 835.7 481.2 837.0 484.0 C838.3 486.8 839.9 488.7 841.0 491.0 C842.1 493.3 843.2 495.8 843.7 498.0 C844.2 500.2 844.3 502.2 844.0 504.2 C843.7 506.1 843.0 508.1 841.7 509.7 C840.4 511.3 838.5 512.7 836.2 513.6 C834.0 514.5 831.0 515.2 828.4 515.2 C825.8 515.2 822.9 514.4 820.6 513.6 C818.3 512.8 815.4 511.0 814.4 510.5 C812.8 510.0 806.8 508.2 805.0 507.3 C803.2 506.4 803.7 505.4 803.4 505.0 C804.0 503.3 805.7 498.7 807.3 494.8 C808.9 490.9 810.8 485.6 812.8 481.6 C814.8 477.6 816.6 474.0 819.0 470.6 C821.4 467.2 825.6 462.8 826.9 461.2 Z" fill="#624838" stroke="#000" stroke-width="3.2" stroke-linejoin="round" stroke-linecap="round" />
<path d="M803.4 505.0 C804.0 503.3 805.7 498.7 807.3 494.8 C808.9 490.9 810.8 485.6 812.8 481.6 C814.8 477.6 816.6 474.0 819.0 470.6 C821.4 467.2 824.0 463.9 826.9 461.2 C829.8 458.6 833.0 456.6 836.2 455.0 C839.5 453.4 842.8 452.3 846.4 451.5 C850.0 450.7 854.1 450.4 858.0 450.2 C861.9 450.0 866.4 450.1 869.8 450.2 C873.2 450.3 876.3 450.4 878.4 450.9 C880.5 451.4 881.4 452.0 882.3 453.2 C883.2 454.4 883.6 456.3 883.9 458.3 C884.2 460.3 884.4 462.1 884.3 465.2 C884.2 468.3 884.0 473.0 883.5 476.9 C883.0 480.8 882.5 485.0 881.6 488.6 C880.8 492.2 879.7 495.8 878.4 498.8 C877.1 501.8 875.8 504.1 873.8 506.6 C871.7 509.1 868.5 511.7 865.9 513.6 C863.3 515.5 860.6 516.9 858.0 518.3 C855.4 519.7 852.9 521.0 850.3 521.8 C847.7 522.6 845.1 522.9 842.5 523.0 C839.9 523.1 837.3 523.0 834.7 522.6 C832.1 522.2 829.5 521.6 826.9 520.6 C824.3 519.6 821.6 518.3 819.0 516.7 C816.4 515.1 813.6 512.8 811.2 511.2 C808.9 509.7 806.3 508.3 805.0 507.3 C803.7 506.3 803.7 505.4 803.4 505.0 Z" fill="none" stroke="#000" stroke-width="3.6" stroke-linejoin="round" stroke-linecap="round" />
<path d="M803.6 502.5 L804.3 509" fill="none" stroke="#000" stroke-width="2.4" stroke-linejoin="round" stroke-linecap="round" />
<path d="M823.8 469.8 C824.8 468.6 827.9 464.4 830.0 462.8 C832.1 461.2 834.2 460.1 836.2 460.0 C838.3 459.9 840.7 460.9 842.5 462.0 C844.3 463.1 846.1 464.9 846.8 466.7 C847.4 468.5 847.2 471.1 846.4 473.0 C845.5 474.9 843.7 477.0 841.7 478.4 C839.8 479.8 836.9 481.0 834.7 481.6 C832.5 482.2 830.2 482.4 828.4 482.0 C826.6 481.6 824.7 480.4 823.8 479.2 C822.8 477.9 822.6 476.1 822.6 474.5 C822.6 472.9 823.6 470.6 823.8 469.8 Z" fill="#fff" stroke="#000" stroke-width="3.4" stroke-linejoin="round" stroke-linecap="round" />
<path d="M883.0 487.6 L892.7 476.5 L884.3 488.9Z" fill="#000"/>
<path d="M880.0 498.3 L896.3 481.9 L881.6 499.9Z" fill="#000"/>
<path d="M875.8 505.6 L903.8 491.4 L877.4 508.6Z" fill="#000"/>
</svg>
<div id="top">
 <div id="gallery">Gallery</div>
 <div class="circ" style="left:194px"></div>
 <div class="circ" style="left:310px"></div>
 <div class="circ" style="left:426px"></div>
 <div class="circ" style="left:542px"></div>
 <svg id="icons" width="2048" height="88" viewBox="0 0 2048 88">
<path d="M232.7 27.2 C231.8 27.5 229.1 28.1 227.5 29.1 C225.9 30.1 224.2 31.8 223.3 33.3 C222.4 34.8 222.0 36.4 221.9 38.0 C221.8 39.6 222.7 41.9 222.8 42.7 C220.7 44.8 212.1 53.2 209.9 55.3 C209.7 55.7 208.9 56.8 208.9 57.6 C208.9 58.4 209.2 59.6 209.8 60.2 C210.4 60.8 211.5 61.3 212.3 61.3 C213.2 61.3 214.5 60.5 214.9 60.4 C217.1 58.2 225.8 49.4 228.0 47.2 C228.6 47.4 230.2 48.1 231.5 48.2 C232.8 48.3 234.1 48.3 235.5 47.8 C236.9 47.3 238.5 46.2 239.7 45.0 C240.9 43.8 241.9 42.1 242.5 40.8 C243.1 39.5 242.9 37.7 243.0 37.1 C242.7 37.4 242.0 38.2 241.1 38.9 C240.2 39.6 239.0 41.0 237.8 41.3 C236.6 41.6 235.3 41.3 234.1 40.8 C232.8 40.2 231.3 38.9 230.3 38.0 C229.3 37.1 228.2 36.3 228.0 35.2 C227.8 34.1 228.1 32.7 228.9 31.4 C229.7 30.1 232.0 27.9 232.7 27.2 Z" fill="#9b9b9b"/>
<path d="M333.3 58.4 L354.7 37.8" stroke="#9b9b9b" stroke-width="7" stroke-linecap="round" fill="none"/>
<path d="M343.4 40.3 L351.6 48.3" stroke="#141414" stroke-width="1.3" fill="none"/>
<path d="M335.30 27.20 Q335.92 35.48 344.20 36.10 Q335.92 36.72 335.30 45.00 Q334.68 36.72 326.40 36.10 Q334.68 35.48 335.30 27.20Z" fill="#9b9b9b"/>
<path d="M346.40 26.20 Q346.71 30.38 350.90 30.70 Q346.71 31.02 346.40 35.20 Q346.08 31.02 341.90 30.70 Q346.08 30.38 346.40 26.20Z" fill="#9b9b9b"/>
<path d="M471.1 31.2 C469.5 31.2 463.7 31.0 461.2 31.2 C458.8 31.4 457.8 31.8 456.6 32.6 C455.4 33.4 454.2 34.7 453.9 36.1 C453.6 37.5 454.1 39.3 454.7 40.8 C455.3 42.3 456.6 43.6 457.5 45.0 C458.4 46.4 459.6 47.9 460.1 49.2 C460.6 50.6 460.9 52.0 460.5 53.0 C460.1 54.0 458.7 54.7 457.5 55.2 C456.3 55.8 455.3 56.0 453.3 56.2 C451.3 56.4 446.6 56.2 445.3 56.2" fill="none" stroke="#9b9b9b" stroke-width="5.9" stroke-linecap="round" stroke-linejoin="round"/>
<path d="M448 35.3 L463 35.3 M452 52.9 L467 52.9" stroke="#141414" stroke-width="2" fill="none"/>
<path d="M589.5 28.4 L561.1 41.6 L572.3 43.2 L559.3 56.3 A2.05 2.05 0 0 0 562.2 59.2 L574.8 46 L576.1 56.75Z" fill="#9b9b9b" stroke="#9b9b9b" stroke-width="0.6" stroke-linejoin="round"/>
<path d="M1468.0 18.9 C1467.8 19.8 1467.8 22.3 1466.7 24.4 C1465.6 26.5 1463.6 28.9 1461.2 31.5 C1458.8 34.0 1455.4 37.2 1452.5 39.7 C1449.6 42.2 1446.7 44.6 1443.8 46.8 C1440.8 49.0 1436.3 51.8 1434.8 52.8 C1434.4 52.3 1432.7 50.5 1432.3 50.1 C1433.7 48.6 1437.7 44.3 1440.5 41.4 C1443.3 38.5 1446.3 35.4 1449.2 32.6 C1452.1 29.8 1455.5 26.5 1458.0 24.4 C1460.5 22.3 1462.8 20.7 1464.5 19.8 C1466.2 18.9 1467.4 19.0 1468.0 18.9 Z" fill="#2e6ff3"/>
<path d="M1432.4 54.3 C1431.6 54.1 1429.0 53.2 1427.3 53.4 C1425.5 53.6 1423.3 54.6 1421.9 55.6 C1420.5 56.6 1420.0 58.0 1419.1 59.4 C1418.2 60.8 1417.6 62.4 1416.4 63.8 C1415.2 65.2 1412.6 67.0 1411.8 67.6 C1412.4 67.8 1413.6 68.6 1415.3 68.7 C1417.0 68.8 1419.9 68.8 1421.9 68.2 C1423.9 67.6 1425.8 66.4 1427.3 64.9 C1428.8 63.4 1430.3 61.1 1431.2 59.4 C1432.1 57.7 1432.4 55.3 1432.6 54.5 Z" fill="#2e6ff3"/>
<path d="M1591.9 18.4 C1593.9 20.3 1602.0 28.0 1604.0 29.9 C1603.2 31.0 1599.9 35.3 1599.1 36.4 C1599.0 37.9 1599.0 42.6 1598.5 45.2 C1598.0 47.8 1597.5 49.4 1595.8 51.8 C1594.1 54.1 1590.1 57.8 1588.1 59.4 C1586.1 61.0 1585.2 61.4 1583.8 61.6 C1582.3 61.8 1580.1 60.7 1579.4 60.5 C1579.1 60.3 1578.0 59.6 1577.7 59.4 C1575.6 61.1 1567.3 68.1 1565.2 69.8 C1564.1 69.8 1560.1 70.2 1558.6 69.8 C1557.0 69.3 1556.3 68.3 1555.9 67.1 C1555.5 65.9 1556.3 63.4 1556.4 62.7 C1558.0 60.5 1564.6 51.8 1566.2 49.6 C1565.6 48.3 1563.1 44.0 1562.4 41.9 C1561.7 39.8 1560.9 39.4 1561.9 37.0 C1562.9 34.6 1566.6 29.7 1568.4 27.7 C1570.2 25.7 1569.9 25.5 1572.8 24.9 C1575.7 24.4 1583.7 24.5 1585.9 24.4 C1586.9 23.4 1590.9 19.4 1591.9 18.4 Z" fill="#c8c8c8" stroke="#c8c8c8" stroke-width="1" stroke-linejoin="round"/>
<path d="M1578.6 60.0 L1590.0 47.4" stroke="#202020" stroke-width="2.5" stroke-linecap="round" fill="none"/>
<path d="M1702.97 44.1 L1723.9 23.7 A9 9 0 0 1 1736.7 23.2 L1746.9 33.4 L1719.4 60.2Z" fill="#c8c8c8"/>
<path d="M1701.6 46.0 L1692.9 54.5 L1703.5 63.4 Q1709.5 68.9 1715 64.5 L1718.0 62.3Z" fill="#c8c8c8"/>
<rect x="1848.1" y="19.8" width="35.9" height="36.1" rx="5" fill="#c8c8c8"/>
<rect x="1834.1" y="30.0" width="39.9" height="39.9" rx="7" fill="#202020"/>
<rect x="1836.1" y="32.0" width="35.9" height="35.9" rx="5.5" fill="#c8c8c8"/>
<circle cx="2000" cy="44" r="28" fill="#866c50"/>
 </svg>
</div>
<div id="side">
 <div class="track" style="top:9px;height:336px"></div>
 <div class="thumb" style="top:228px"></div>
 <div id="sq"></div>
 <div class="track" style="top:518.5px;height:336px"></div>
 <div class="thumb" style="top:520px"></div>
 <svg width="80" height="1027" viewBox="0 0 80 1027">

<path d="M28.2 920.75 H45.6 A9.68 9.68 0 0 0 45.6 901.4 H31" fill="none" stroke="#a0a0a0" stroke-width="2.1"/>
<path d="M24.1 901.5 L32.2 894.1 V908.9Z" fill="#a0a0a0"/>
<path d="M51.8 1001.2 H34.1 A9.8 9.8 0 0 1 34.1 981.6 H49" fill="none" stroke="#393939" stroke-width="2.1"/>
<path d="M55.6 981.6 L48.0 974.4 V988.8Z" fill="#393939"/>

 </svg>
</div>
</body></html>
